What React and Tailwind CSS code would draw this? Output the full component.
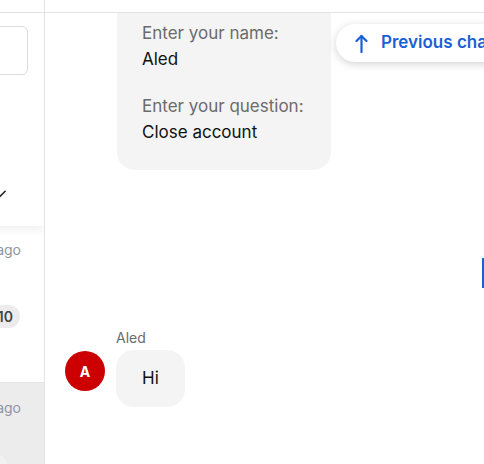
import { Check } from 'lucide-react';

export default function App() {
  return (
    <div
      className="w-[484px] h-[464px] flex bg-white overflow-hidden"
      style={{ fontFamily: 'Inter, "Noto Sans", sans-serif' }}
    >
      {/* Sidebar (scrolled so only its right edge shows) */}
      <aside className="w-[45px] shrink-0 border-r border-[#e3e3e3] overflow-hidden flex flex-col">
        <div className="w-[260px] -ml-[216px] flex flex-col h-full">
          <div className="h-[13px] shrink-0 border-b border-[#e3e3e3]" />
          <div className="relative z-10 bg-white shadow-[0_4px_8px_rgba(0,0,0,0.06)] h-[213px] shrink-0 flex flex-col">
            <div className="mt-[13px] mx-4 h-[49px] rounded-md border border-[#dcdcdc]" />
            <div className="mt-[112px] flex justify-end pr-[36px]">
              <Check size={17} strokeWidth={2.2} className="text-[#222]" />
            </div>
          </div>
          <div className="h-[157px] shrink-0 flex flex-col pr-[23px] pt-[14px] border-b border-[#e6e6e6]">
            <div className="text-right text-[14px] leading-[20px] text-[#8c96a3]">2 days ago</div>
            <div className="mt-[45px] flex justify-end">
              <span className="rounded-full bg-[#ececec] text-[#444] font-semibold text-[14px] leading-[23px] px-[7px] mr-[1px]">
                10
              </span>
            </div>
          </div>
          <div className="flex-1 bg-[#ececec] flex flex-col pr-[23px] pt-[15px]">
            <div className="text-right text-[14px] leading-[20px] text-[#8c96a3]">3 days ago</div>
            <div className="mt-[36px] flex justify-end pr-[14px]">
              <span className="w-[22px] h-[22px] rounded-full bg-[#f1f1f1]" />
            </div>
          </div>
        </div>
      </aside>

      {/* Main conversation */}
      <main className="relative flex-1 flex flex-col overflow-hidden">
        <div className="h-[13px] shrink-0 border-b border-[#e3e3e3]" />

        <div className="ml-[72px] w-[214px] bg-[#f4f4f4] rounded-b-[18px] pl-[25px] pr-4 pt-[7px] pb-[25px] text-[17px] leading-[26px]">
          <div className="text-[#6b6b6b]">Enter your name:</div>
          <div className="text-[#111]">Aled</div>
          <div className="mt-[21px] text-[#6b6b6b]">Enter your question:</div>
          <div className="text-[#111]">Close account</div>
        </div>

        <div className="mt-[158px] flex items-start gap-[11px] pl-[20px]">
          <div className="mt-[23px] w-10 h-10 rounded-full bg-[#cc0000] flex items-center justify-center text-white font-bold text-[14px]">
            A
          </div>
          <div className="flex flex-col">
            <div className="text-[14px] leading-[20px] text-[#6b6b6b] mb-[2px]">Aled</div>
            <div className="bg-[#f4f4f4] rounded-[18px] px-[26px] py-4 text-[17px] leading-[25px] text-[#111]">
              Hi
            </div>
          </div>
        </div>

        <button className="absolute left-[291px] top-[24px] h-[38px] pl-[19px] pr-6 rounded-full bg-white shadow-[0_2px_8px_rgba(0,0,0,0.18)] flex items-center gap-[13px] whitespace-nowrap text-[#1b5fd6] font-semibold text-[17px]">
          <svg width="13" height="19" viewBox="0 0 13 19" fill="none" stroke="currentColor" strokeWidth="2.2" strokeLinecap="round" strokeLinejoin="round">
            <path d="M6.5 18V2" />
            <path d="M1.5 7L6.5 2L11.5 7" />
          </svg>
          Previous chats
        </button>

        <div className="absolute right-0 top-[258px] w-[2px] h-[30px] bg-[#1b5fd6]" />
      </main>
    </div>
  );
}
